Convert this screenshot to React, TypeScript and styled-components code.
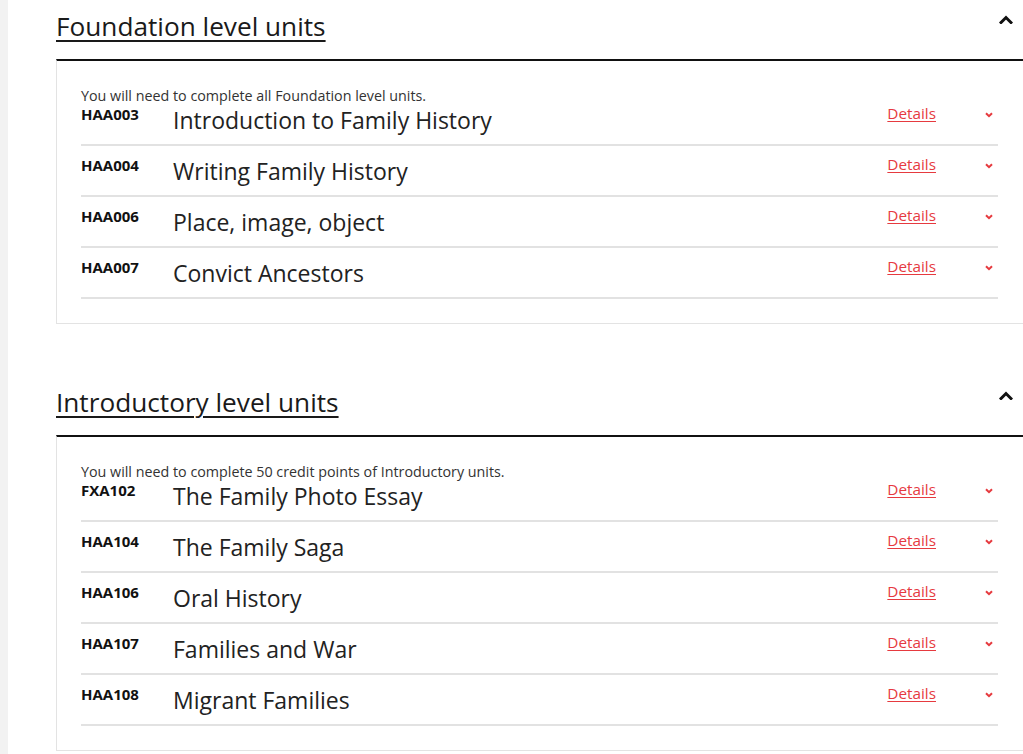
import React from 'react';
import styled, { createGlobalStyle } from 'styled-components';

const GlobalStyle = createGlobalStyle`
  html, body {
    margin: 0;
    padding: 0;
    background: #fff;
    overflow: hidden;
  }
  body {
    font-family: "Open Sans", "Noto Sans", Arial, sans-serif;
    color: #222;
  }
`;

type Unit = { code: string; title: string };

const sections: { heading: string; intro: string; units: Unit[] }[] = [
  {
    heading: 'Foundation level units',
    intro: 'You will need to complete all Foundation level units.',
    units: [
      { code: 'HAA003', title: 'Introduction to Family History' },
      { code: 'HAA004', title: 'Writing Family History' },
      { code: 'HAA006', title: 'Place, image, object' },
      { code: 'HAA007', title: 'Convict Ancestors' },
    ],
  },
  {
    heading: 'Introductory level units',
    intro: 'You will need to complete 50 credit points of Introductory units.',
    units: [
      { code: 'FXA102', title: 'The Family Photo Essay' },
      { code: 'HAA104', title: 'The Family Saga' },
      { code: 'HAA106', title: 'Oral History' },
      { code: 'HAA107', title: 'Families and War' },
      { code: 'HAA108', title: 'Migrant Families' },
    ],
  },
];

const CaretUp = () => (
  <svg width="14" height="9" viewBox="0 0 14 9">
    <polyline points="2,7.5 7,2.5 12,7.5" fill="none" stroke="#111" strokeWidth="3" strokeLinecap="square" />
  </svg>
);

const ChevronDown = () => (
  <svg width="8" height="6" viewBox="0 0 8 6">
    <polyline points="1,1.2 4,4.2 7,1.2" fill="none" stroke="#e63a3f" strokeWidth="2" />
  </svg>
);

export default function App() {
  return (
    <>
      <GlobalStyle />
      <Page>
        <SideStrip />
        <Main>
          {sections.map(s => (
            <Section key={s.heading}>
              <HeadingRow>
                <Heading>{s.heading}</Heading>
                <Toggle>
                  <CaretUp />
                </Toggle>
              </HeadingRow>
              <Box>
                <Intro>{s.intro}</Intro>
                {s.units.map(u => (
                  <Row key={u.code}>
                    <Code>{u.code}</Code>
                    <Title>{u.title}</Title>
                    <DetailsLink href="#">Details</DetailsLink>
                    <Expand>
                      <ChevronDown />
                    </Expand>
                  </Row>
                ))}
              </Box>
            </Section>
          ))}
        </Main>
      </Page>
    </>
  );
}

const Page = styled.div`
  display: flex;
  width: 1023px;
  height: 754px;
  overflow: hidden;
`;

const SideStrip = styled.div`
  flex: 0 0 8px;
  background: #f2f2f2;
`;

const Main = styled.div`
  flex: 0 0 auto;
  padding: 9px 0 0 48px;
  display: flex;
  flex-direction: column;
  gap: 61px;
`;

const Section = styled.section`
  width: 1010px;
`;

const HeadingRow = styled.div`
  display: flex;
  justify-content: space-between;
  align-items: flex-start;
  padding-right: 53px;
  margin-bottom: 15px;
`;

const Heading = styled.h2`
  margin: 0;
  font-size: 26.2px;
  font-weight: 400;
  line-height: 35px;
  color: #1a1a1a;
  text-decoration: underline;
  text-decoration-thickness: 2px;
  text-underline-offset: 4px;
`;

const Toggle = styled.div`
  margin-top: 6px;
  display: flex;
`;

const Box = styled.div`
  border-top: 2px solid #111;
  border-left: 1px solid #e3e3e3;
  border-right: 1px solid #e3e3e3;
  border-bottom: 1px solid #e3e3e3;
  padding: 25px 67px 24px 24px;
`;

const Intro = styled.p`
  margin: 0;
  font-size: 14.3px;
  line-height: 19px;
  color: #333;
`;

const Row = styled.div`
  display: grid;
  grid-template-columns: 92px 1fr auto 62px;
  align-items: start;
  padding: 10px 0 9px;
  border-bottom: 2px solid #e2e2e2;

  &:first-of-type {
    padding-top: 0;
  }
`;

const Code = styled.div`
  font-size: 15px;
  font-weight: 700;
  line-height: 19px;
  color: #111;
`;

const Title = styled.div`
  font-size: 23px;
  line-height: 30px;
  color: #222;
`;

const DetailsLink = styled.a`
  margin-left: 1px;
  font-size: 15.3px;
  line-height: 16px;
  color: #e63a3f;
  text-decoration: underline;
  text-underline-offset: 2px;
`;

const Expand = styled.div`
  display: flex;
  justify-content: flex-end;
  padding: 7px 5px 0 0;
`;
